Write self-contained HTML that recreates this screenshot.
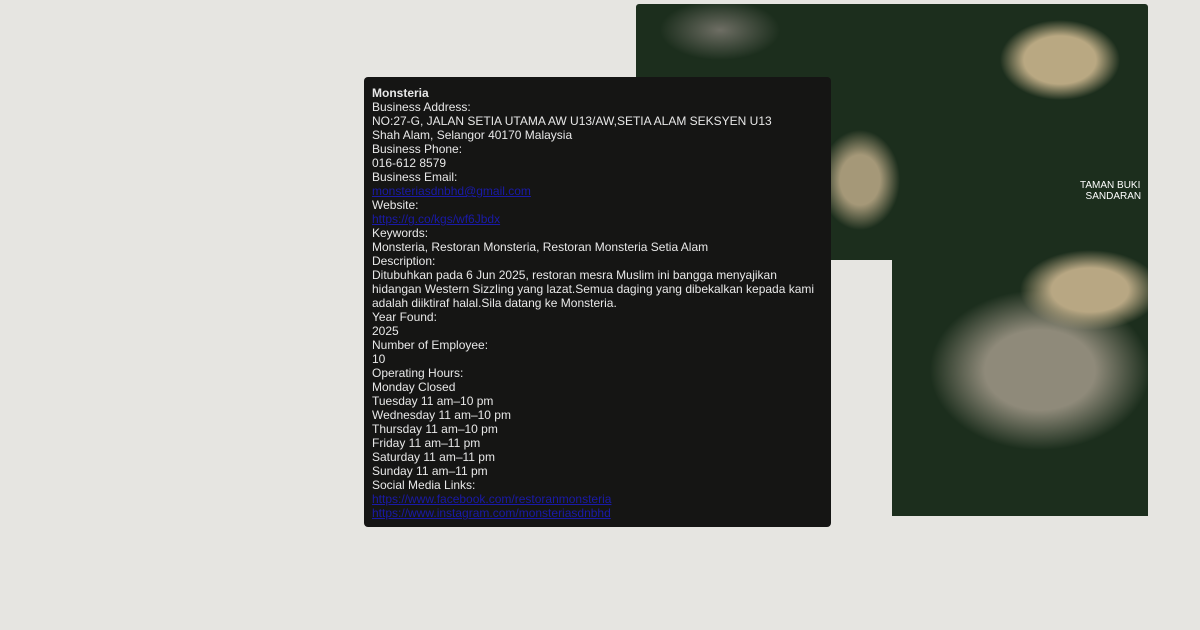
<!DOCTYPE html>
<html><head><style>
body{margin:0;width:1200px;height:630px;background:#e6e5e1;position:relative;overflow:hidden;font-family:"Liberation Sans",sans-serif}
.map{position:absolute;background:
radial-gradient(ellipse 60px 40px at 1060px 60px,#b9a882 0,#b9a882 60%,transparent 100%),
radial-gradient(ellipse 70px 40px at 1090px 290px,#b8a783 0,#b8a783 55%,transparent 100%),
radial-gradient(ellipse 110px 80px at 1040px 370px,#8f8a7a 0,#8f8a7a 50%,transparent 100%),
radial-gradient(ellipse 40px 50px at 860px 180px,#a59878 0,#a59878 50%,transparent 100%),
radial-gradient(ellipse 60px 30px at 720px 30px,#6e6e64 0,transparent 100%),
#1c2e1d;background-size:1200px 630px}
.box{position:absolute;left:364px;top:77px;width:444px;height:433px;padding:9px 15px 8px 8px;background:#151514;border-radius:4px;color:#e8e8e8;font-size:12px;line-height:14px}
a{color:#1a1aa8;text-decoration:underline}
</style></head><body>
<div class="map" style="left:636px;top:4px;width:512px;height:256px;border-radius:3px 3px 0 0;background-position:-636px -4px"></div>
<div class="map" style="left:892px;top:260px;width:256px;height:256px;background-position:-892px -260px"></div>
<div style="position:absolute;left:1080px;top:180px;color:#fff;font-size:10px;line-height:11px">TAMAN BUKI<br>&nbsp;&nbsp;SANDARAN</div>
<div class="box">
<b>Monsteria</b><br>
Business Address:<br>
NO:27-G, JALAN SETIA UTAMA AW U13/AW,SETIA ALAM SEKSYEN U13<br>
Shah Alam, Selangor 40170 Malaysia<br>
Business Phone:<br>
016-612 8579<br>
Business Email:<br>
<a>monsteriasdnbhd@gmail.com</a><br>
Website:<br>
<a>https://g.co/kgs/wf6Jbdx</a><br>
Keywords:<br>
Monsteria, Restoran Monsteria, Restoran Monsteria Setia Alam<br>
Description:<br>
Ditubuhkan pada 6 Jun 2025, restoran mesra Muslim ini bangga menyajikan hidangan Western Sizzling yang lazat.Semua daging yang dibekalkan kepada kami adalah diiktiraf halal.Sila datang ke Monsteria.<br>
Year Found:<br>
2025<br>
Number of Employee:<br>
10<br>
Operating Hours:<br>
Monday Closed<br>
Tuesday 11 am–10 pm<br>
Wednesday 11 am–10 pm<br>
Thursday 11 am–10 pm<br>
Friday 11 am–11 pm<br>
Saturday 11 am–11 pm<br>
Sunday 11 am–11 pm<br>
Social Media Links:<br>
<a>https://www.facebook.com/restoranmonsteria</a><br>
<a>https://www.instagram.com/monsteriasdnbhd</a>
</div>
</body></html>
